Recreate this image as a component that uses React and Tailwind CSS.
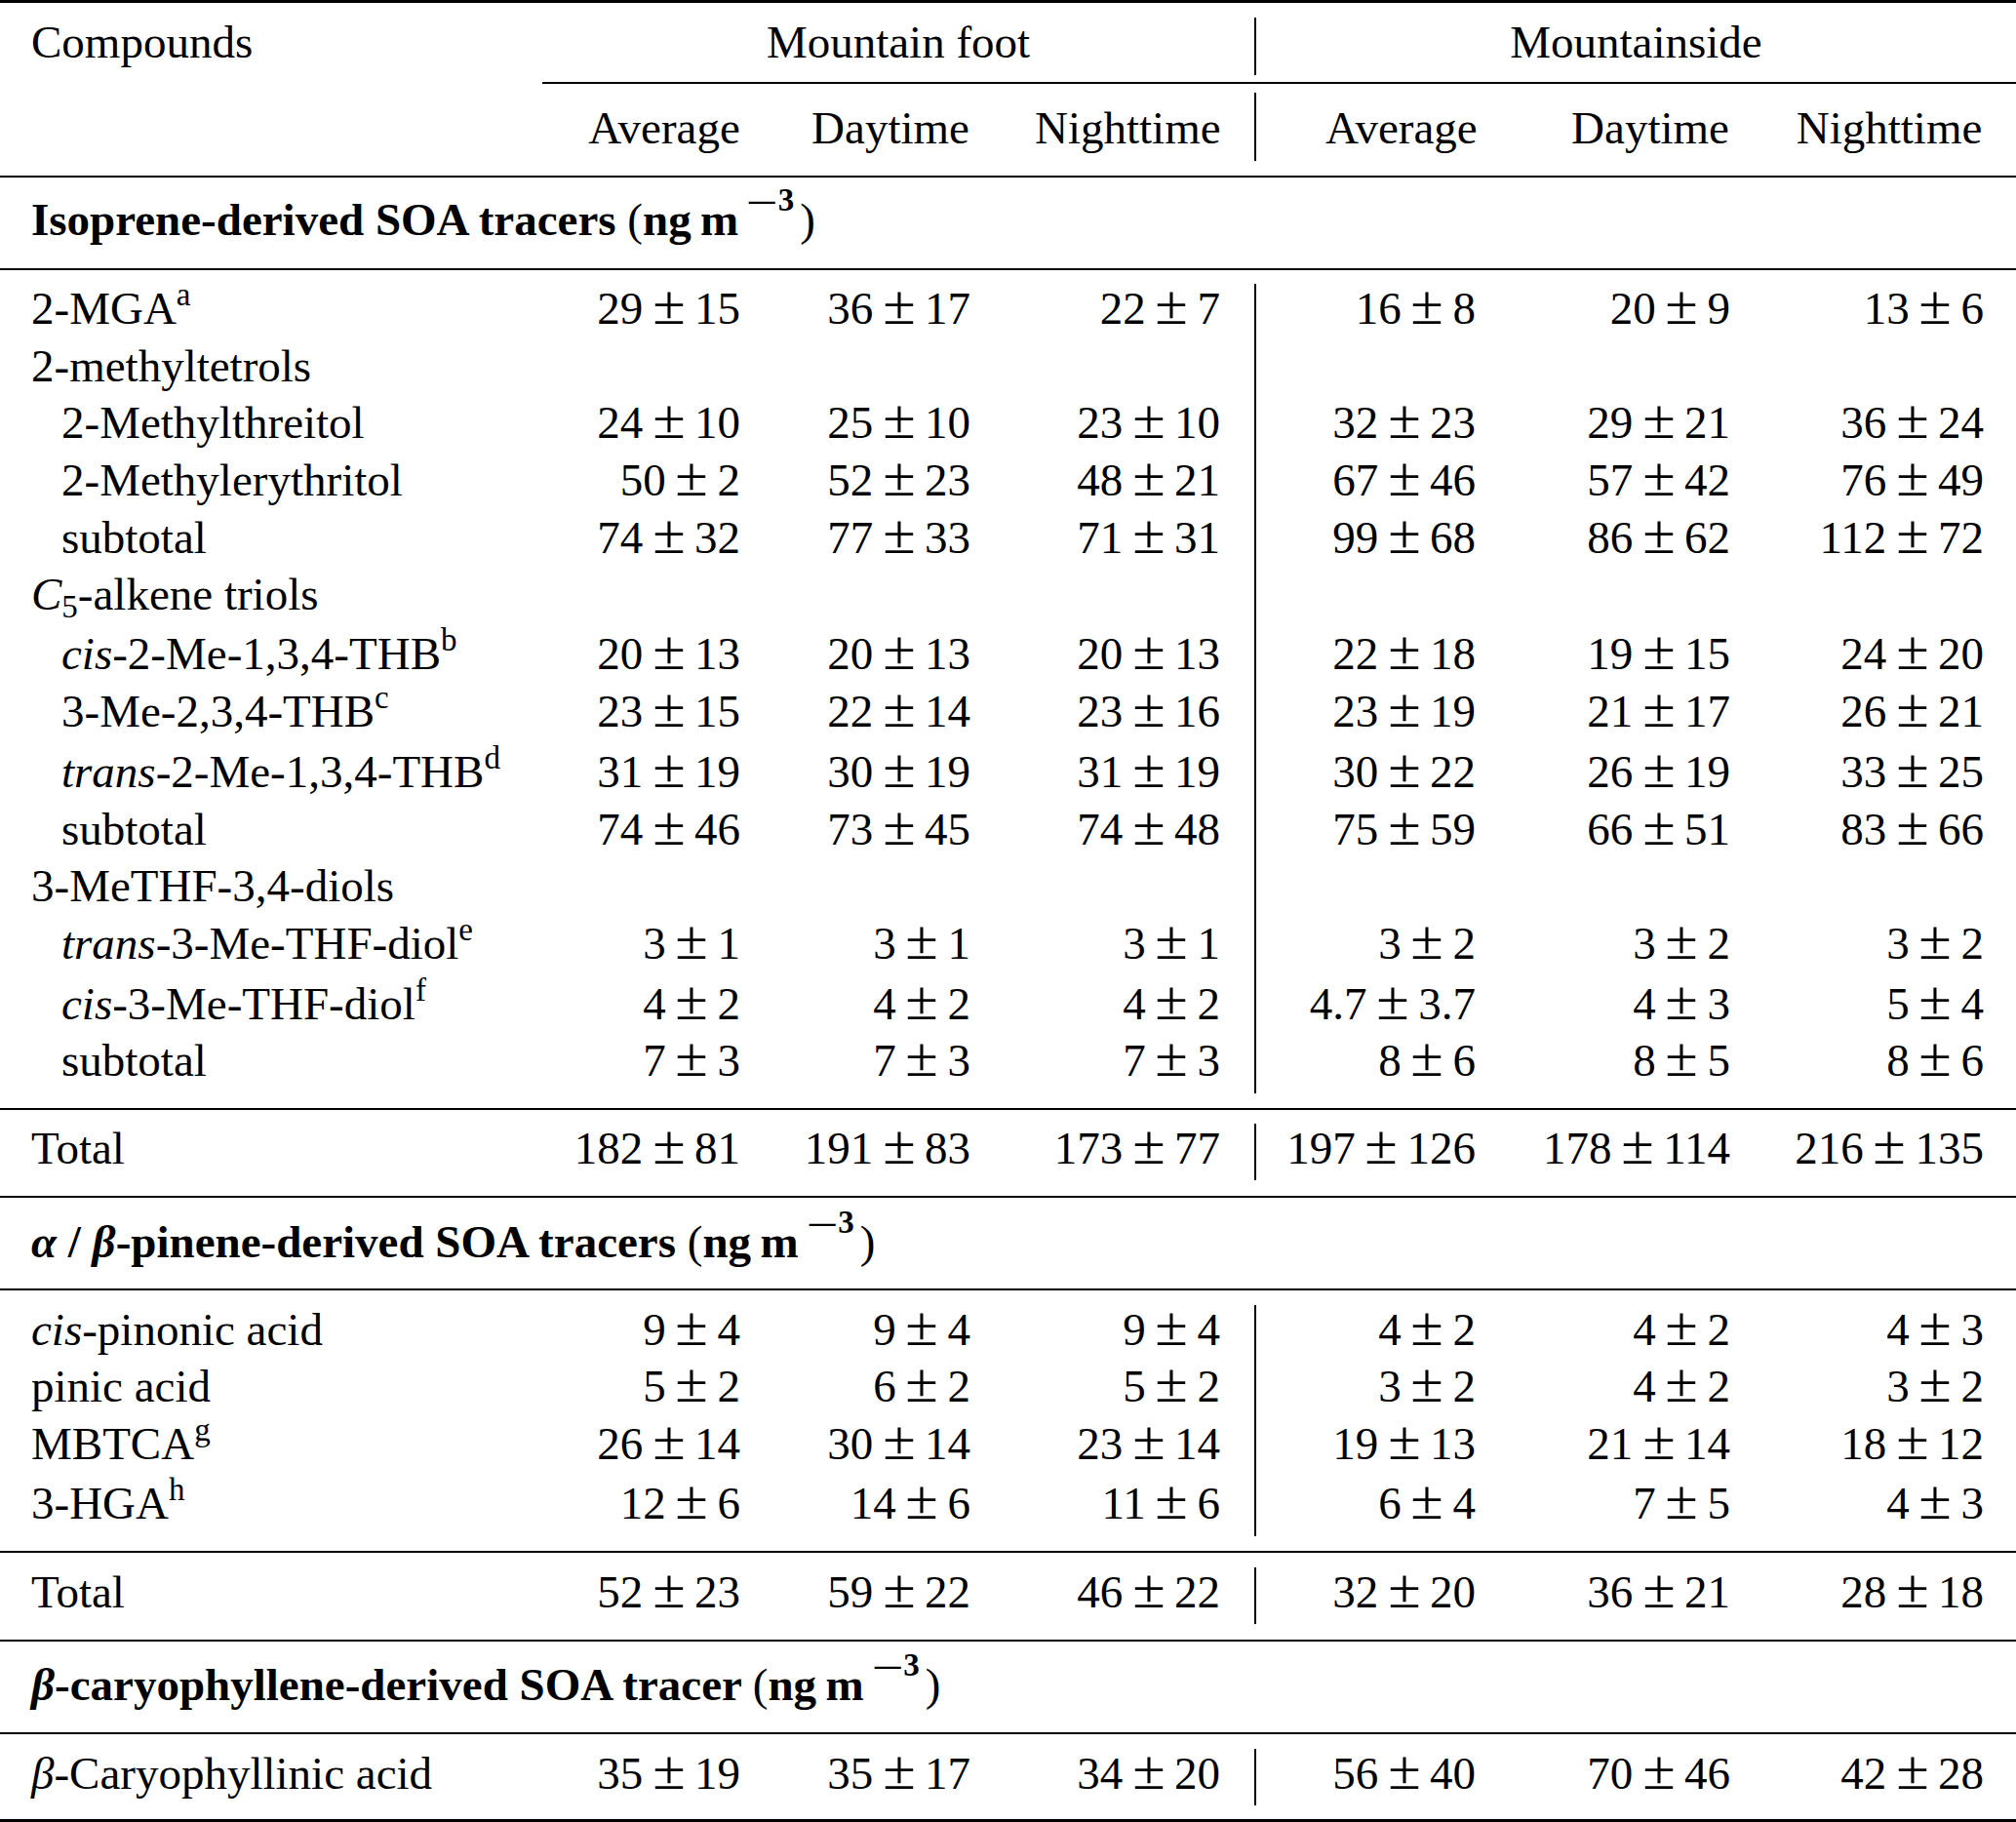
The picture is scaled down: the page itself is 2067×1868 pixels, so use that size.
import React from "react";

const grid = "grid grid-cols-[556px_224px_236px_270px_248px_261px_272px]";

const numCls = [
  "pr-[21px]",
  "pr-[21px]",
  "pr-[35px]",
  "pr-[21px] border-l-2 border-black",
  "pr-[21px]",
  "pr-[33px]",
];

const Sup = ({ children }) => (
  <span className="text-[33px] leading-[0] align-[19px]">{children}</span>
);

const Unit = () => (
  <>
    {" "}
    <span className="font-normal">(</span>ng{"\u2009"}m
    <span className="ml-[16px] text-[33px] leading-[0] align-[25px]">
      <span className="inline-block scale-x-[1.6] mr-[8px]">–</span>3
    </span>
    <span className="font-normal ml-[6px]">)</span>
  </>
);

const Num = ({ v }) => {
  const [a, b] = v.split("±");
  return (
    <>
      {a}
      <span className="inline-block mx-[13.5px] leading-none scale-x-[1.3] scale-y-[1.2] origin-[50%_39px]">
        ±
      </span>
      {b}
    </>
  );
};

const Row = ({ label, indent, v, h = "h-[58.7px]", pad = "" }) => (
  <div className={`${grid} ${h} leading-[50.2px]`}>
    <div className={`whitespace-nowrap ${indent ? "pl-[63px]" : "pl-[32px]"} ${pad}`}>
      {label}
    </div>
    {numCls.map((c, i) => (
      <div key={i} className={`text-right whitespace-nowrap ${c} ${pad}`}>
        {v ? <Num v={v[i]} /> : null}
      </div>
    ))}
  </div>
);

const Rule = ({ thick }) => (
  <div className={thick ? "h-[3px] bg-black" : "h-[2px] bg-black"} />
);

const Section = ({ children }) => (
  <div className="h-[58.7px] leading-[50.2px] pl-[32px] font-bold whitespace-nowrap">
    {children}
  </div>
);

const isoprene = [
  { label: <>2-MGA<Sup>a</Sup></>, v: ["29±15", "36±17", "22±7", "16±8", "20±9", "13±6"] },
  { label: "2-methyltetrols" },
  { label: "2-Methylthreitol", indent: true, v: ["24±10", "25±10", "23±10", "32±23", "29±21", "36±24"] },
  { label: "2-Methylerythritol", indent: true, v: ["50±2", "52±23", "48±21", "67±46", "57±42", "76±49"] },
  { label: "subtotal", indent: true, v: ["74±32", "77±33", "71±31", "99±68", "86±62", "112±72"] },
  {
    label: (
      <>
        <i>C</i>
        <span className="text-[33px] leading-[0] align-[-8px]">5</span>-alkene triols
      </>
    ),
  },
  {
    label: <><i>cis</i>-2-Me-1,3,4-THB<Sup>b</Sup></>,
    indent: true,
    h: "h-[60.7px]",
    pad: "pt-[2px]",
    v: ["20±13", "20±13", "20±13", "22±18", "19±15", "24±20"],
  },
  { label: <>3-Me-2,3,4-THB<Sup>c</Sup></>, indent: true, v: ["23±15", "22±14", "23±16", "23±19", "21±17", "26±21"] },
  {
    label: <><i>trans</i>-2-Me-1,3,4-THB<Sup>d</Sup></>,
    indent: true,
    h: "h-[62.2px]",
    pad: "pt-[3.5px]",
    v: ["31±19", "30±19", "31±19", "30±22", "26±19", "33±25"],
  },
  { label: "subtotal", indent: true, v: ["74±46", "73±45", "74±48", "75±59", "66±51", "83±66"] },
  { label: "3-MeTHF-3,4-diols" },
  { label: <><i>trans</i>-3-Me-THF-diol<Sup>e</Sup></>, indent: true, v: ["3±1", "3±1", "3±1", "3±2", "3±2", "3±2"] },
  {
    label: <><i>cis</i>-3-Me-THF-diol<Sup>f</Sup></>,
    indent: true,
    h: "h-[61.7px]",
    pad: "pt-[3px]",
    v: ["4±2", "4±2", "4±2", "4.7±3.7", "4±3", "5±4"],
  },
  { label: "subtotal", indent: true, v: ["7±3", "7±3", "7±3", "8±6", "8±5", "8±6"] },
];

const pinene = [
  { label: <><i>cis</i>-pinonic acid</>, v: ["9±4", "9±4", "9±4", "4±2", "4±2", "4±3"] },
  { label: "pinic acid", v: ["5±2", "6±2", "5±2", "3±2", "4±2", "3±2"] },
  { label: <>MBTCA<Sup>g</Sup></>, v: ["26±14", "30±14", "23±14", "19±13", "21±14", "18±12"] },
  {
    label: <>3-HGA<Sup>h</Sup></>,
    h: "h-[61.2px]",
    pad: "pt-[2.5px]",
    v: ["12±6", "14±6", "11±6", "6±4", "7±5", "4±3"],
  },
];

export default function App() {
  return (
    <div className="w-[2067px] bg-white text-black [font-family:'Liberation_Serif','Times_New_Roman',serif] text-[47px]">
      <Rule thick />

      {/* column groups */}
      <div className="pt-[15px] pb-[7.3px]">
        <div className="grid grid-cols-[556px_730px_781px] h-[58.7px] leading-[50.2px]">
          <div className="pl-[32px]">Compounds</div>
          <div className="text-center">Mountain foot</div>
          <div className="text-center border-l-2 border-black">Mountainside</div>
        </div>
      </div>
      <div className="ml-[556px] h-[2px] bg-black" />

      <div className="pt-[9px] pb-[15.3px]">
        <div className={`${grid} h-[69.7px] leading-[50.2px]`}>
          <div className="pt-[11px]" />
          <div className="pt-[11px] text-center pl-[47px] pr-[21px]">Average</div>
          <div className="pt-[11px] text-center pl-[51px] pr-[21px]">Daytime</div>
          <div className="pt-[11px] text-center pl-[45px] pr-[35px]">Nighttime</div>
          <div className="pt-[11px] text-center pl-[71px] pr-[21px] border-l-2 border-black">Average</div>
          <div className="pt-[11px] text-center pl-[76px] pr-[21px]">Daytime</div>
          <div className="pt-[11px] text-center pl-[45px] pr-[33px]">Nighttime</div>
        </div>
      </div>
      <Rule />

      {/* isoprene */}
      <div className="pt-[18px] pb-[16.3px]">
        <Section>
          Isoprene-derived SOA tracers<Unit />
        </Section>
      </div>
      <Rule />
      <div className="pt-[14px] pb-[14.7px]">
        {isoprene.map((r, i) => (
          <Row key={i} {...r} />
        ))}
      </div>
      <Rule />
      <div className="pt-[14px] pb-[15.3px]">
        <Row label="Total" v={["182±81", "191±83", "173±77", "197±126", "178±114", "216±135"]} />
      </div>
      <Rule />

      {/* pinene */}
      <div className="pt-[20px] pb-[14.3px]">
        <Section>
          <i>α</i> / <i>β</i>-pinene-derived SOA tracers<Unit />
        </Section>
      </div>
      <Rule />
      <div className="pt-[15px] pb-[14.7px]">
        {pinene.map((r, i) => (
          <Row key={i} {...r} />
        ))}
      </div>
      <Rule />
      <div className="pt-[15px] pb-[15.3px]">
        <Row label="Total" v={["52±23", "59±22", "46±22", "32±20", "36±21", "28±18"]} />
      </div>
      <Rule />

      {/* caryophyllene */}
      <div className="pt-[19px] pb-[15.3px]">
        <Section>
          <i>β</i>-caryophyllene-derived SOA tracer<Unit />
        </Section>
      </div>
      <Rule />
      <div className="pt-[15px] pb-[13.3px]">
        <Row
          label={<><i>β</i>-Caryophyllinic acid</>}
          v={["35±19", "35±17", "34±20", "56±40", "70±46", "42±28"]}
        />
      </div>
      <Rule thick />
    </div>
  );
}
